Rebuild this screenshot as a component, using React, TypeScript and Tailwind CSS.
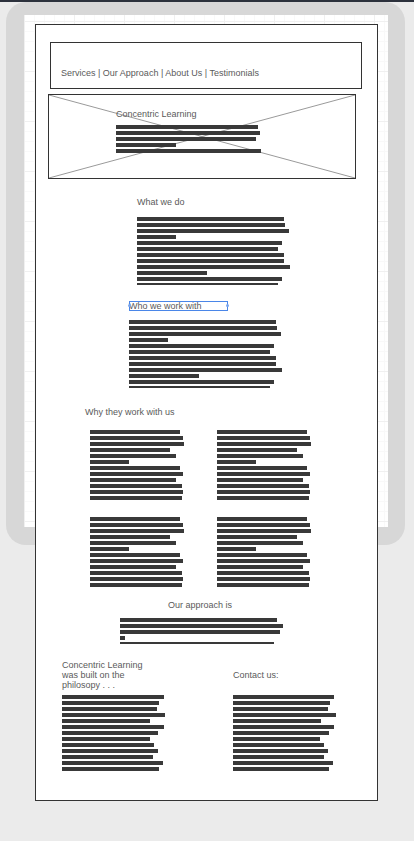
const font = { fontFamily: '"Liberation Sans", Arial, sans-serif' };

const longBlock = [147, 148, 152, 39, 145, 141, 147, 147, 153, 70, 145, 141];
const colBlock = [90, 93, 94, 80, 86, 39, 90, 93, 86, 92, 93, 92];
const footBlock = [102, 97, 95, 103, 88, 102, 96, 88, 92, 96, 91, 101, 97];

const Bars = ({ widths, className = "" }: { widths: number[]; className?: string }) => (
  <div className={`flex flex-col gap-[2px] overflow-hidden ${className}`}>
    {widths.map((w, i) => (
      <div key={i} className="h-[4px] shrink-0 bg-[#393939]" style={{ width: w }} />
    ))}
  </div>
);

const Label = ({ children, className = "" }: { children: React.ReactNode; className?: string }) => (
  <div className={`text-[9px] leading-[10px] text-[#5a5a5a] ${className}`}>{children}</div>
);

export default function App() {
  return (
    <div className="relative h-[841px] w-full overflow-hidden bg-[#ebebeb]" style={font}>
      {/* top strip */}
      <div className="h-[2px] bg-[#2c313c]" />

      {/* phone frame behind the page */}
      <div className="absolute left-[6px] top-[2px] h-[543px] w-[399px] rounded-[20px] bg-[#d7d7d7]">
        <div className="absolute left-[18px] top-[13px] h-[512px] w-[364px] bg-white bg-[linear-gradient(to_right,#f0f0f0_1px,transparent_1px),linear-gradient(to_bottom,#f0f0f0_1px,transparent_1px),linear-gradient(to_right,#f9f9f9_1px,transparent_1px),linear-gradient(to_bottom,#f9f9f9_1px,transparent_1px)] bg-[size:50px_50px,50px_50px,10px_10px,10px_10px] bg-[position:0_6px,0_6px,0_6px,0_6px]" />
      </div>

      {/* page wireframe */}
      <div className="relative z-10 ml-[35px] mt-[22px] h-[777px] w-[343px] border border-[#333] bg-white">
        {/* nav */}
        <div className="ml-[14px] mt-[17px] flex h-[47px] w-[312px] items-end border border-[#333] pb-[10px] pl-[10px]">
          <Label>Services | Our Approach | About Us | Testimonials</Label>
        </div>

        {/* hero */}
        <div className="relative ml-[12px] mt-[5px] h-[85px] w-[308px] border border-[#333] pl-[67px] pt-[14px]">
          <svg className="absolute inset-0 h-full w-full" viewBox="0 0 306 83" preserveAspectRatio="none">
            <line x1="0" y1="0" x2="306" y2="83" stroke="#9a9a9a" strokeWidth="1" />
            <line x1="306" y1="0" x2="0" y2="83" stroke="#9a9a9a" strokeWidth="1" />
          </svg>
          <div className="relative">
            <Label>Concentric Learning</Label>
            <Bars widths={[142, 144, 140, 60, 145]} className="mt-[6px]" />
          </div>
        </div>

        {/* what we do */}
        <div className="ml-[101px] mt-[18px]">
          <Label>What we do</Label>
          <Bars widths={longBlock} className="mt-[10px] h-[68px]" />
        </div>

        {/* who we work with */}
        <div className="ml-[93px] mt-[16px]">
          <div className="relative h-[10px] w-[99px]">
            <Label>Who we work with</Label>
            <span className="absolute inset-0 border border-[#4a86e8]" />
            <span className="absolute left-[-1px] top-[3px] h-[3px] w-[3px] rounded-full bg-[#7aa6ee]" />
            <span className="absolute right-[-1px] top-[3px] h-[3px] w-[3px] rounded-full bg-[#7aa6ee]" />
          </div>
          <Bars widths={longBlock} className="mt-[9px] h-[68px]" />
        </div>

        {/* why they work with us */}
        <Label className="ml-[49px] mt-[19px]">Why they work with us</Label>
        <div className="ml-[54px] mt-[13px] grid grid-cols-[127px_127px] gap-y-[17px]">
          <Bars widths={colBlock} />
          <Bars widths={colBlock} />
          <Bars widths={colBlock} />
          <Bars widths={colBlock} />
        </div>

        {/* our approach */}
        <Label className="ml-[132px] mt-[13px]">Our approach is</Label>
        <Bars widths={[157, 163, 160, 5, 154]} className="ml-[84px] mt-[8px] h-[26px]" />

        {/* bottom columns */}
        <div className="ml-[26px] mt-[16px] grid grid-cols-[171px_1fr]">
          <div>
            <div className="flex h-[30px] items-center">
              <Label>
                Concentric Learning
                <br />
                was built on the
                <br />
                philosopy . . .
              </Label>
            </div>
            <Bars widths={footBlock} className="mt-[5px]" />
          </div>
          <div>
            <div className="flex h-[30px] items-center">
              <Label>Contact us:</Label>
            </div>
            <Bars widths={[101, 97, 95, 103, 88, 101, 96, 87, 91, 95, 91, 100, 96]} className="mt-[5px]" />
          </div>
        </div>
      </div>
    </div>
  );
}
